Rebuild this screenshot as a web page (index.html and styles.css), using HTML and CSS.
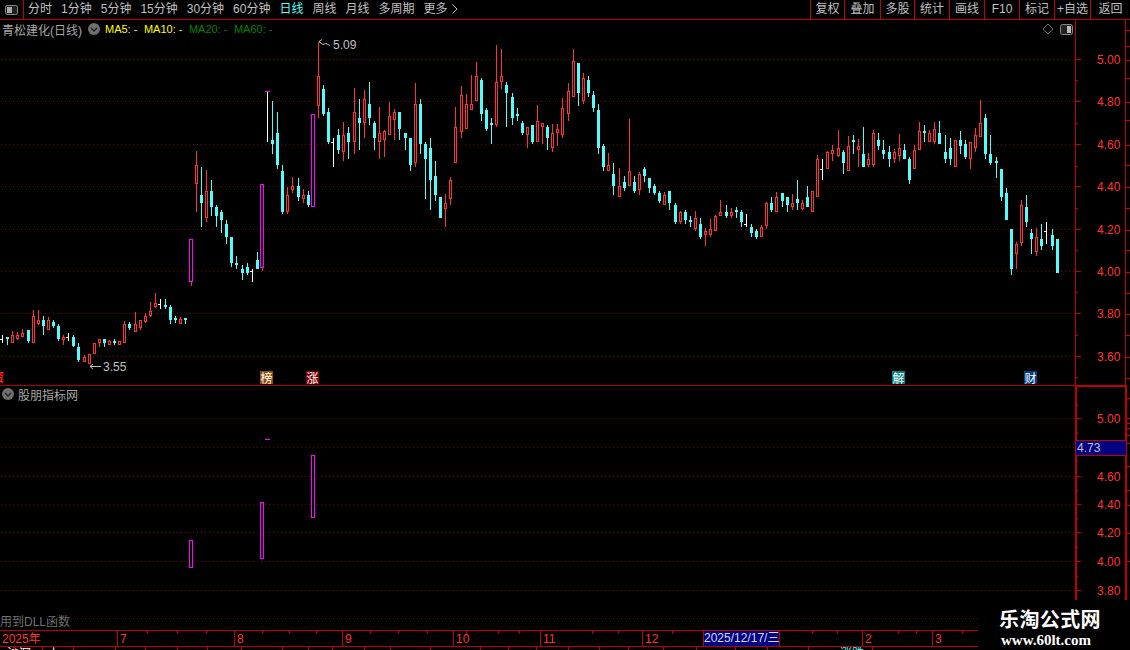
FILE: index.html
```html
<!DOCTYPE html>
<html lang="zh">
<head>
<meta charset="utf-8">
<title>青松建化(日线)</title>
<link rel="stylesheet" href="styles.css">
</head>
<body>
<div class="app">
  <header class="toolbar">
    <div class="pane-toggle">
      <svg width="13" height="10" viewBox="0 0 13 10"><rect x="0.5" y="0.5" width="12" height="9" rx="2" fill="#222" stroke="#888"/><rect x="2" y="2" width="5" height="6" fill="#aaa"/></svg>
    </div>
    <nav class="periods">
      <span>分时</span><span>1分钟</span><span>5分钟</span><span>15分钟</span><span>30分钟</span><span>60分钟</span>
      <span class="active">日线</span><span>周线</span><span>月线</span><span>多周期</span><span>更多 <svg class="more" width="6" height="10" viewBox="0 0 6 10"><path d="M0.5 0.5 L5 5 L0.5 9.5" fill="none" stroke="#c0c0c0"/></svg></span>
    </nav>
    <div class="tools">
      <span>复权</span><span>叠加</span><span>多股</span><span>统计</span><span>画线</span><span>F10</span><span>标记</span><span>+自选</span><span>返回</span>
    </div>
  </header>

  <section class="pane pane-upper">
    <svg id="upper" class="plot" width="1130" height="365" viewBox="0 0 1130 365"></svg>
    <div class="legend">
      <span class="stock">青松建化(日线)</span>
      <svg class="chev" width="12" height="12" viewBox="0 0 12 12"><circle cx="6" cy="6" r="6" fill="#6e6e6e"/><path d="M3 5 L6 8 L9 5" fill="none" stroke="#222" stroke-width="1.4"/></svg>
      <span class="ma yellow">MA5: -</span><span class="ma yellow">MA10: -</span><span class="ma green">MA20: -</span><span class="ma green">MA60: -</span>
    </div>
    <div class="corner-icons">
      <svg width="12" height="12" viewBox="0 0 12 12"><path d="M6 1 L11 6 L6 11 L1 6 Z" fill="none" stroke="#707070"/></svg>
      <svg width="13" height="11" viewBox="0 0 13 11"><rect x="0.5" y="0.5" width="12" height="10" rx="2" fill="#222" stroke="#888"/><rect x="7" y="2" width="4" height="7" fill="#bbb"/></svg>
    </div>
    <div class="flags">
      <span class="flag orange" data-x="260">榜</span>
      <span class="flag maroon" data-x="306">涨</span>
      <span class="flag teal" data-x="892">解</span>
      <span class="flag navy" data-x="1024">财</span>
    </div>
  </section>

  <section class="pane pane-lower">
    <svg id="lower" class="plot" width="1130" height="245" viewBox="0 0 1130 245"></svg>
    <div class="legend">
      <svg class="chev first" width="12" height="12" viewBox="0 0 12 12"><circle cx="6" cy="6" r="6" fill="#6e6e6e"/><path d="M3 5 L6 8 L9 5" fill="none" stroke="#222" stroke-width="1.4"/></svg>
      <span class="stock">股朋指标网</span>
    </div>
    <div class="price-tag">4.73</div>
    <div class="dll">用到DLL函数</div>
  </section>

  <footer class="dates">
    <div id="dateCells" class="date-cells">
      <span class="c118">2025年</span><span class="c117">7</span><span class="c108">8</span><span class="c111">9</span><span class="c87">10</span><span class="c102">11</span><span class="c220">12</span><span class="c70">2</span><span class="c45">3</span>
    </div>
    <div class="cursor-date">2025/12/17/三</div>
  </footer>
  <div id="status" class="status"><span class="s1">沪深</span><span class="s2">上</span><span class="s3">涨跌</span></div>

  <aside class="watermark">
    <div class="wm-cn">乐淘公式网</div>
    <div class="wm-en">www.60lt.com</div>
  </aside>
</div>
<script src="chart.js"></script>
</body>
</html>
```

FILE: styles.css
```css
* { box-sizing: border-box; }
html, body { margin: 0; padding: 0; background: #000; overflow: hidden; }
body { font-family: "Liberation Sans", "Noto Sans CJK SC", sans-serif; font-size: 12px; color: #c0c0c0; }
.app { position: relative; width: 1130px; height: 650px; overflow: hidden; background: #000; display: flex; flex-direction: column; }

.toolbar { height: 20px; flex: none; display: flex; align-items: stretch; border-bottom: 1px solid #c00000; line-height: 19px; }
.pane-toggle { width: 24px; border-right: 1px solid #c00000; display: flex; align-items: center; justify-content: center; padding-right: 1px; }
.periods { display: flex; gap: 9px; padding-left: 4px; white-space: nowrap; }
.periods .active { color: #54fcfc; }
.more { vertical-align: -1px; margin-left: 1px; }
.tools { margin-left: auto; display: grid; grid-template-columns: 34px 36px 34px 35px 35px 35px 35px 36px 40px; }
.tools span { border-left: 1px solid #c00000; text-align: center; white-space: nowrap; }

.pane { position: relative; flex: none; }
.pane-upper { height: 365px; }
.pane-lower { height: 245px; }
.plot { display: block; }
.plot text { font-family: "Liberation Sans", sans-serif; font-size: 12px; }
.plot .axis-label { fill: #ff3232; }
.plot .ext-label { fill: #c0c0c0; }
.plot .edge-glyph { fill: #ff2020; font-family: "Noto Sans CJK SC", sans-serif; font-weight: 700; }

.legend { position: absolute; left: 2px; top: 2px; display: flex; align-items: center; height: 14px; white-space: nowrap; }
.stock { color: #a8a8a8; }
.chev { margin: 0 5px 0 6px; flex: none; }
.chev.first { margin: 0 4px 0 0; }
.ma { font-size: 11px; margin-right: 6.5px; }
.yellow { color: #ffff00; }
.green { color: #008000; }

.corner-icons { position: absolute; right: 57px; top: 3px; display: flex; align-items: center; gap: 6px; }

.flag { position: absolute; top: 351px; width: 13px; height: 13px; color: #fff; font-size: 12px; line-height: 13px; text-align: center; font-family: "Noto Sans CJK SC", sans-serif; }
.flag.orange { background: #8a4e0a; }
.flag.maroon { background: #800000; }
.flag.teal { background: #008080; }
.flag.navy { background: #004080; }

.price-tag { position: absolute; left: 1076px; top: 55px; width: 50px; height: 16px; background: #000080; border-top: 1px solid #c00000; border-bottom: 1px solid #c00000; color: #c0c0d8; line-height: 14px; padding-left: 1px; }
.dll { position: absolute; left: 0; top: 229px; background: #000; color: #707070; line-height: 16px; padding-right: 2px; }

.dates { position: relative; height: 17px; flex: none; width: 978px; border-top: 1px solid #c00000; border-bottom: 1px solid #c00000; color: #ff3232; }
.date-cells { display: flex; height: 15px; line-height: 16px; }
.date-cells span { flex: none; padding-left: 2px; border-right: 1px solid #c00000; overflow: hidden; white-space: nowrap; }
.date-cells span:last-child { border-right: 0; }
.c118 { width: 118px; }
.c117 { width: 117px; }
.c108 { width: 108px; }
.c111 { width: 111px; }
.c87 { width: 87px; }
.c102 { width: 102px; }
.c220 { width: 220px; }
.c70 { width: 70px; }
.c45 { width: 45px; }
.tick { position: absolute; top: 0; width: 1px; height: 3px; background: #c00000; }
.cursor-date { position: absolute; left: 703px; top: 0; width: 77px; height: 15px; background: #000080; border-left: 1px solid #c00000; border-right: 1px solid #c00000; color: #d8d8f0; line-height: 15px; text-align: center; white-space: nowrap; }

.status { position: relative; flex: none; height: 3px; overflow: hidden; width: 978px; }
.status span { position: absolute; top: 0; line-height: 14px; }
.s1 { left: 7px; color: #fff; }
.s2 { left: 48px; color: #fff; }
.s3 { left: 840px; color: #54fcfc; }
.status i { position: absolute; top: 0; width: 1px; height: 3px; background: #c00000; }

.watermark { position: absolute; right: 0; bottom: 0; width: 152px; height: 50px; background: #000; color: #fff; text-align: center; padding-right: 8px; }
.wm-cn { font-family: "Noto Sans CJK SC", sans-serif; font-weight: 700; font-size: 20px; line-height: 24px; letter-spacing: 0.4px; margin-top: 7px; white-space: nowrap; }
.wm-en { font-family: "Liberation Serif", serif; font-weight: 700; font-size: 15px; line-height: 16px; margin-top: 1px; margin-right: 8px; white-space: nowrap; }
```

FILE: chart.js
```js
var RED = '#ff3232', CYAN = '#54fcfc', WHITE = '#ffffff', MAG = '#ff00ff';
var GRID = '#780000', LINE = '#c00000';

// [zoomX, high, bodyTop, bodyBottom, low, type]
var segments = [
  { ox: 0, oy: 280, d: [
    [7,165,178,178,190,'w'],[22,172,172,178,195,'c'],[37,153,165,187,190,'r'],[52,155,165,175,180,'r'],[67,148,160,167,170,'r'],
    [85,150,150,183,188,'c'],[100,90,108,185,185,'r'],[115,90,120,130,135,'r'],[130,108,120,137,165,'c'],[145,112,120,147,150,'r'],
    [160,120,125,137,145,'c'],[175,132,138,178,183,'c'],[190,165,170,178,195,'r'],[205,160,172,172,183,'w'],[220,165,170,197,200,'c'],
    [235,190,200,240,245,'c'],[253,225,232,243,247,'r'],[268,222,222,248,250,'r'],[283,190,190,220,220,'r'],[298,177,177,186,200,'r'],
    [313,177,177,190,200,'c'],[328,180,183,192,195,'r'],[343,177,182,190,195,'c'],[358,183,183,192,195,'r'],[373,123,132,186,190,'r'],
    [388,125,132,145,150,'c'],[406,97,132,152,152,'r'],[421,120,120,140,150,'r'],[436,100,107,122,130,'r'],[451,67,93,105,110,'r'],
    [466,40,69,78,85,'r'],[481,57,72,72,87,'w'],[496,57,75,82,88,'c'],[511,75,81,120,132,'c'],[526,107,113,120,130,'c'],
    [541,112,118,130,132,'r'],[556,114,114,120,132,'c']
  ]},
  { ox: 180, oy: 30, d: [
    [34,628,628,752,768,'m'],[49,363,406,458,545,'r'],[64,411,495,519,591,'c'],[79,420,484,560,575,'r'],[94,450,483,531,558,'c'],
    [109,525,531,558,591,'c'],[124,540,546,570,609,'c'],[139,570,582,621,642,'c'],[154,621,621,699,711,'c'],[169,678,699,705,717,'c'],
    [187,705,717,729,750,'c'],[202,699,711,729,735,'c'],[217,717,724,724,756,'w'],[232,666,690,717,717,'c'],[247,462,462,712,723,'m'],
    [262,184,184,184,336,'t'],[277,213,330,342,372,'c'],[292,246,309,405,417,'c'],[307,405,423,546,552,'c'],[322,472,496,543,552,'r'],
    [337,441,468,477,489,'r'],[355,444,468,501,513,'c'],[370,477,496,503,519,'r'],[385,484,495,525,531,'c'],[400,253,253,527,531,'m'],
    [415,36,139,224,264,'r'],[430,166,177,252,258,'c'],[445,234,246,336,342,'c'],[460,324,336,336,411,'w'],[475,297,315,360,372,'c'],
    [490,277,316,362,393,'r'],[505,292,309,336,387,'c'],[523,175,247,332,372,'r'],[538,208,264,279,360,'c'],[553,181,208,275,324,'r'],
    [568,156,222,264,285,'c'],[583,273,279,324,360,'c'],[598,232,310,332,387,'r'],[613,300,304,326,381,'r'],[628,215,259,312,315,'r'],
    [643,238,247,266,330,'r'],[658,246,246,297,330,'c'],[676,309,309,324,360,'c'],[691,324,324,405,423,'c'],[706,160,222,395,411,'r'],
    [721,207,222,342,372,'c'],[736,336,342,387,507,'c'],[751,324,354,450,540,'c'],[766,393,438,495,513,'c'],[781,501,501,564,564,'c'],
    [796,492,520,533,591,'r'],[811,441,450,503,525,'r'],[826,232,292,396,399,'r'],[844,168,196,304,324,'r'],[859,193,223,294,297,'r'],
    [874,136,223,236,236,'r'],[889,96,139,210,210,'r']
  ]},
  { ox: 460, oy: 30, d: [
    [64,145,150,252,273,'c'],[79,235,240,297,303,'c'],[94,264,279,285,342,'c'],[109,45,156,282,291,'r'],[124,57,138,153,177,'r'],
    [139,156,165,189,291,'c'],[157,189,201,264,285,'c'],[172,235,252,258,273,'c'],[187,273,279,309,315,'c'],[202,291,291,312,354,'r'],
    [217,285,285,336,342,'c'],[232,225,273,333,333,'r'],[247,279,279,288,342,'r'],[262,285,291,324,360,'c'],[277,282,309,351,366,'r'],
    [292,282,297,306,348,'r'],[307,205,235,312,324,'r'],[325,160,183,248,273,'r'],[340,57,94,197,197,'r'],[355,99,99,189,228,'c'],
    [370,129,144,210,222,'r'],[385,139,150,189,201,'c'],[400,183,195,234,246,'c'],[415,222,240,354,372,'c'],[430,342,348,411,423,'c'],
    [445,369,405,420,420,'r'],[460,399,432,468,495,'c'],[478,414,468,497,497,'r'],[493,438,456,474,483,'c'],[508,267,423,465,465,'r'],
    [523,438,456,483,489,'c'],[538,426,432,477,495,'r'],[553,411,417,438,456,'c'],[568,444,444,474,489,'c'],[583,462,468,489,495,'c'],
    [598,483,489,513,519,'c'],[613,486,495,522,525,'r'],[628,483,483,519,540,'c'],[646,519,525,576,582,'c'],[661,543,546,573,582,'r'],
    [676,540,546,570,582,'c'],[691,558,570,576,591,'c'],[706,543,564,594,603,'r'],[721,564,582,621,627,'c'],[736,594,603,612,648,'r'],
    [751,567,597,612,621,'r'],[766,555,558,600,603,'r'],[781,510,546,555,555,'r'],[799,525,546,558,564,'c'],[814,534,546,555,564,'r'],
    [829,531,540,546,564,'c'],[844,540,546,576,591,'c'],[859,552,582,582,591,'w'],[874,582,591,609,621,'c'],[889,597,603,621,627,'c']
  ]},
  { ox: 760, oy: 90, d: [
    [3,405,411,438,438,'r'],[19,336,339,405,417,'r'],[34,321,339,360,366,'c'],[49,306,321,363,366,'r'],[67,309,309,333,351,'c'],
    [82,321,321,345,366,'c'],[97,312,339,348,360,'r'],[112,270,327,339,360,'c'],[127,330,339,354,360,'r'],[142,288,321,351,351,'c'],
    [157,303,303,363,366,'r'],[172,195,207,318,321,'r'],[187,207,238,238,270,'w'],[202,183,186,234,237,'r'],[217,165,180,189,213,'r'],
    [235,120,175,195,201,'r'],[250,180,186,219,252,'c'],[265,138,168,240,240,'r'],[280,135,150,156,192,'c'],[295,147,168,177,231,'r'],
    [310,111,192,231,231,'c'],[325,189,207,222,231,'r'],[340,120,129,222,231,'r'],[355,129,150,168,180,'c'],[370,150,180,192,207,'c'],
    [388,168,186,207,231,'c'],[403,177,186,204,219,'r'],[418,132,174,195,213,'r'],[433,162,180,207,207,'c'],[448,201,207,270,282,'c'],
    [463,165,180,235,237,'r'],[478,96,123,177,180,'r'],[493,105,123,129,156,'c'],[508,120,129,153,156,'r'],[523,96,117,153,162,'r'],
    [538,93,129,162,162,'c'],[556,135,186,207,219,'c'],[571,144,174,207,225,'c'],[586,150,150,228,228,'r'],[601,123,150,168,192,'c'],
    [616,150,162,201,207,'c'],[631,156,156,204,237,'r'],[646,114,135,171,186,'r'],[661,30,99,138,138,'r'],[676,72,84,192,207,'c'],
    [691,135,192,219,225,'c'],[709,201,213,219,264,'c'],[724,237,237,321,333,'c'],[739,294,309,390,390,'c'],[754,417,417,537,555,'c'],
    [769,456,462,489,537,'r'],[784,330,345,456,468,'r'],[799,315,351,396,411,'c'],[814,417,429,447,492,'c'],[829,414,441,483,498,'r'],
    [844,402,447,468,480,'c'],[859,396,424,424,462,'w'],[877,417,435,468,480,'c'],[892,447,447,549,549,'c']
  ]}
];

var DOT_DEFS = function (id) {
  return '<defs><pattern id="' + id + '" width="4" height="1" patternUnits="userSpaceOnUse"><rect x="1" width="1" height="1" fill="' + GRID + '" shape-rendering="crispEdges"/></pattern></defs>';
};
function rect(x, y, w, h, fill) {
  return '<rect x="' + x + '" y="' + y + '" width="' + w + '" height="' + h + '" fill="' + fill + '" shape-rendering="crispEdges"/>';
}
function outline(x, y, w, h, stroke) {
  return '<rect x="' + (x + 0.5) + '" y="' + (y + 0.5) + '" width="' + w + '" height="' + h + '" fill="#000" stroke="' + stroke + '" shape-rendering="crispEdges"/>';
}
function dotted(id, y, x0, x1) {
  return rect(x0, y, x1 - x0, 1, 'url(#' + id + ')');
}
function label(x, y, text, cls) {
  return '<text x="' + x + '" y="' + y + '" class="' + cls + '">' + text + '</text>';
}

function axisFrame(h, top) {
  return rect(1075, top, 1, h - top, LINE) + rect(1125, top, 1, h - top, LINE);
}

function drawUpper() {
  var top = 20, s = DOT_DEFS('dotU');
  var grid = [[59,'5.00'],[101,'4.80'],[144,'4.60'],[186,'4.40'],[229,'4.20'],[271,'4.00'],[313,'3.80'],[356,'3.60']];
  grid.forEach(function (g) {
    var y = g[0] - top;
    s += dotted('dotU', y, 0, 1075);
    s += rect(1075, y, 6, 1, LINE);
    s += label(1097, y + 5, g[1], 'axis-label');
  });
  [80,123,166,208,250,292,335,377].forEach(function (y) { s += rect(1075, y - top, 3, 1, LINE); });
  s += axisFrame(365, 0);
  [30,46,60,78,102,120,145,165,187,208,230,250,272,293,314,335,357,378].forEach(function (y) { s += rect(1126, y - top, 4, 1, LINE); });

  segments.forEach(function (seg) {
    seg.d.forEach(function (c) {
      var x = Math.floor(seg.ox + c[0] / 3);
      var hi = Math.round(seg.oy + c[1] / 3) - top, t = Math.round(seg.oy + c[2] / 3) - top;
      var b = Math.round(seg.oy + c[3] / 3) - top, lo = Math.round(seg.oy + c[4] / 3) - top;
      var k = c[5];
      if (k === 'c') {
        s += rect(x, hi, 1, Math.max(lo - hi, 1), CYAN) + rect(x - 1, t, 3, Math.max(b - t, 2), CYAN);
      } else if (k === 'r') {
        s += rect(x, hi, 1, Math.max(lo - hi, 1), RED) + outline(x - 1, t, 2, Math.max(b - t, 2), RED);
      } else if (k === 'w') {
        s += rect(x, hi, 1, lo - hi, WHITE) + rect(x - 2, t, 2, 1, WHITE);
      } else if (k === 't') {
        s += rect(x, hi, 1, lo - hi, WHITE) + rect(x - 2, hi, 5, 1, MAG);
      } else if (k === 'm') {
        s += rect(x, b, 1, Math.max(lo - b, 1), RED) + outline(x - 2, t, 3, b - t, MAG);
      }
    });
  });

  // extreme markers
  s += '<path d="M330 25.5 L326 23.5 L323 24.5 L319 21.5 M319 21.5 L322 19.5 M319 21.5 L322 24" fill="none" stroke="#c0c0c0"/>';
  s += label(333, 29, '5.09', 'ext-label');
  s += '<path d="M101 346.5 H90 M90 346.5 L93 344 M90 346.5 L93 349" fill="none" stroke="#c0c0c0"/>';
  s += label(103, 351, '3.55', 'ext-label');
  s += label(-8, 362, '资', 'edge-glyph');
  document.getElementById('upper').innerHTML = s;
}

function drawLower() {
  var top = 385, s = DOT_DEFS('dotL');
  s += rect(0, 0, 1075, 1, '#b00000') + rect(1075, 0, 51, 2, LINE);
  var grid = [[418,'5.00'],[447,''],[476,'4.60'],[504,'4.40'],[532,'4.20'],[561,'4.00'],[590,'3.80']];
  grid.forEach(function (g) {
    var y = g[0] - top;
    s += dotted('dotL', y, 0, 1075);
    s += rect(1075, y, 6, 1, LINE);
    if (g[1]) s += label(1097, y + 5, g[1], 'axis-label');
  });
  s += dotted('dotL', 618 - top, 0, 978);
  [405,433,461,490,518,547,576].forEach(function (y) { s += rect(1075, y - top, 3, 1, LINE); });
  s += rect(1076, 0, 1, 215, LINE) + axisFrame(215, 0) + rect(1126, 0, 1, 215, LINE);
  [398,418,423,428,435,443,466,490,505,533,561].forEach(function (y) { s += rect(1127, y - top, 3, 1, LINE); });
  s += outline(189, 540 - top, 3, 27, MAG) + outline(260, 502 - top, 3, 56, MAG) + outline(311, 455 - top, 3, 62, MAG);
  s += rect(265, 439 - top, 5, 1, MAG);
  document.getElementById('lower').innerHTML = s;
}

function drawDates() {
  var host = document.querySelector('.dates');
  [147,177,206,262,289,316,370,398,427,466,498,519,592,618,672,812,837,898,916,962].forEach(function (x) {
    var t = document.createElement('i');
    t.className = 'tick';
    t.style.left = x + 'px';
    host.appendChild(t);
  });
  var st = document.getElementById('status');
  [14,42,73,115,145,177,207,241,282,308,332,364,390,430,480,508,536,568,599,628,663,696,735,767,808,872].forEach(function (x) {
    var t = document.createElement('i');
    t.style.left = x + 'px';
    st.appendChild(t);
  });
}

function placeFlags() {
  document.querySelectorAll('.flag').forEach(function (f) { f.style.left = f.getAttribute('data-x') + 'px'; });
}

drawUpper();
drawLower();
drawDates();
placeFlags();
```
